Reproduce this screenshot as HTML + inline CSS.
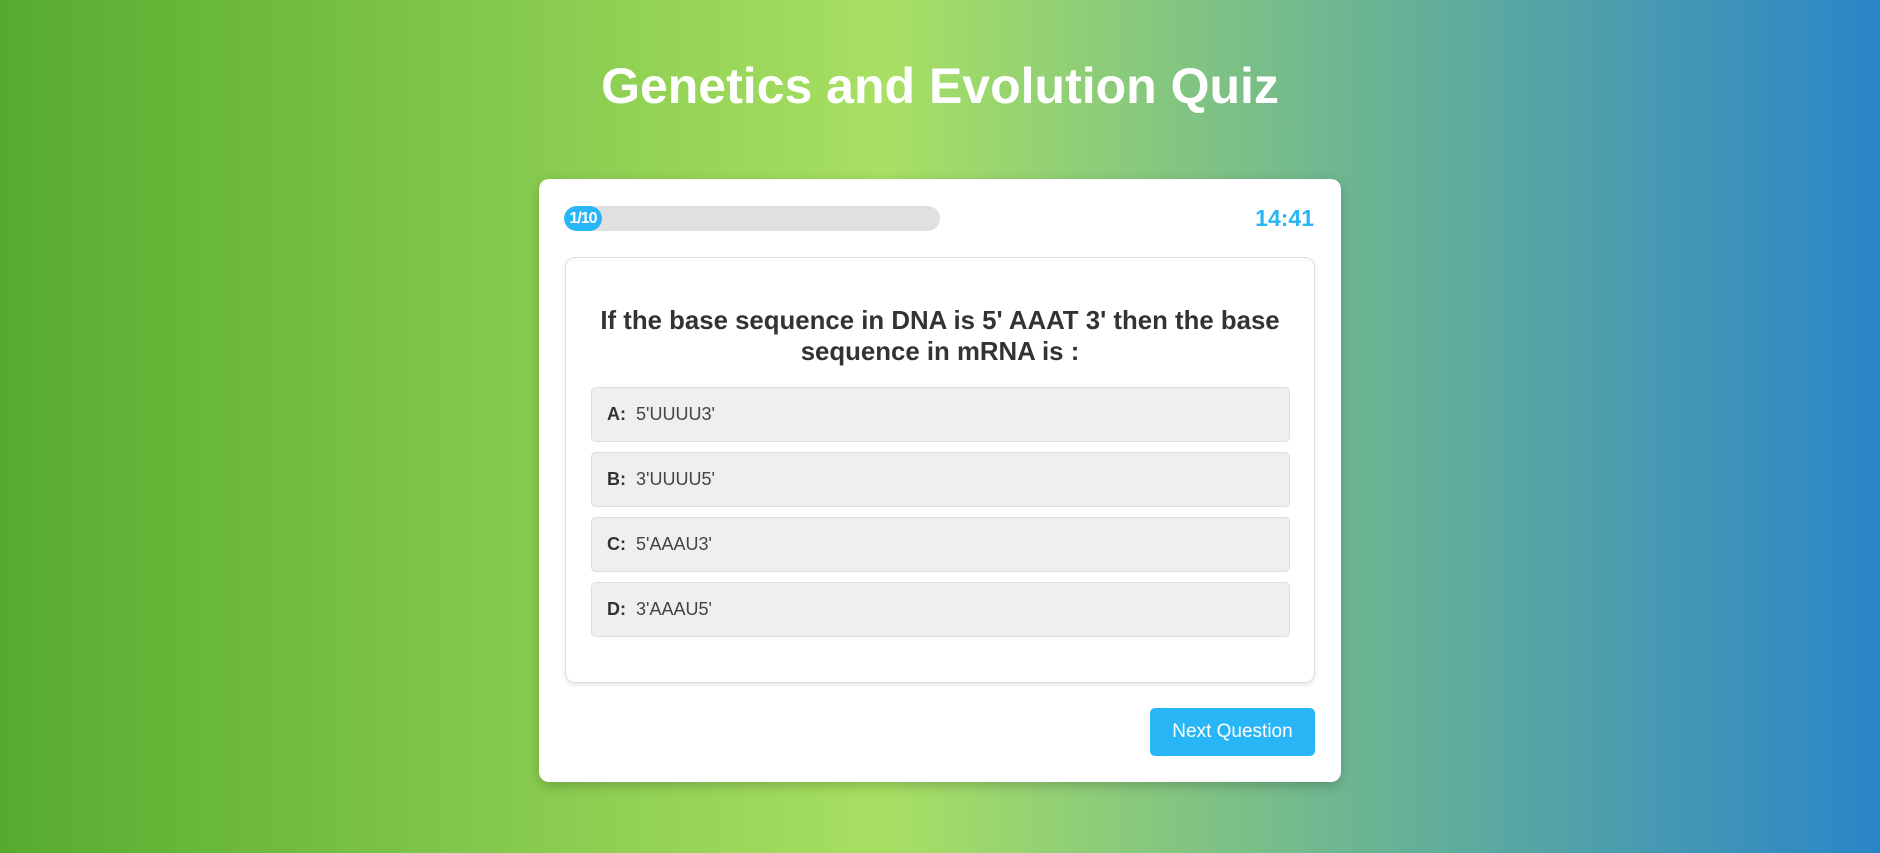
<!DOCTYPE html>
<html><head><style>
html,body{margin:0;padding:0;}
body{width:1880px;height:853px;overflow:hidden;background:linear-gradient(to right,#56ab2f 0%,#a8e063 47%,#2a85c8 100%);font-family:"Liberation Sans",Arial,sans-serif;position:relative;}
h1{position:absolute;top:56px;left:0;width:1880px;margin:0;text-align:center;color:#fff;font-size:50px;font-weight:bold;line-height:60px;}
.card{position:absolute;left:539px;top:179px;width:802px;height:603px;background:#fff;border-radius:10px;box-shadow:0 4px 12px rgba(0,0,0,0.2);}
.bar{position:absolute;left:25px;top:27px;width:376px;height:25px;background:#e0e0e0;border-radius:13px;overflow:hidden;}
.fill{position:absolute;left:0;top:0;width:38px;height:25px;background:#29b6f6;border-radius:13px;color:#fff;font-weight:bold;font-size:16px;line-height:25px;text-align:center;letter-spacing:-1px;}
.timer{position:absolute;right:27px;top:26px;color:#29b6f6;font-weight:bold;font-size:23px;line-height:27px;}
.box{position:absolute;left:26px;top:78px;width:748px;height:424px;border:1px solid #ddd;border-radius:10px;box-shadow:0 2px 5px rgba(0,0,0,0.1);}
.q{position:absolute;left:0;right:0;top:48px;text-align:center;color:#333;font-weight:bold;font-size:25.8px;line-height:31px;}
.opt{position:absolute;left:25px;width:697px;height:53px;background:#efefef;border:1px solid #ddd;border-radius:5px;font-size:18px;line-height:53px;color:#444;box-sizing:content-box;}
.opt b{color:#333;margin-left:15px;margin-right:10px;}
.btn{position:absolute;left:611px;top:529px;width:165px;height:48px;background:#29b6f6;border-radius:5px;color:#fff;font-size:19px;line-height:48px;text-align:center;}
</style></head><body>
<h1>Genetics and Evolution Quiz</h1>
<div class="card">
<div class="bar"><div class="fill">1/10</div></div>
<div class="timer">14:41</div>
<div class="box">
<div class="q">If the base sequence in DNA is 5' AAAT 3' then the base<br>sequence in mRNA is :</div>
<div class="opt" style="top:129px"><b>A:</b>5'UUUU3'</div>
<div class="opt" style="top:194px"><b>B:</b>3'UUUU5'</div>
<div class="opt" style="top:259px"><b>C:</b>5'AAAU3'</div>
<div class="opt" style="top:324px"><b>D:</b>3'AAAU5'</div>
</div>
<div class="btn">Next Question</div>
</div>
</body></html>
